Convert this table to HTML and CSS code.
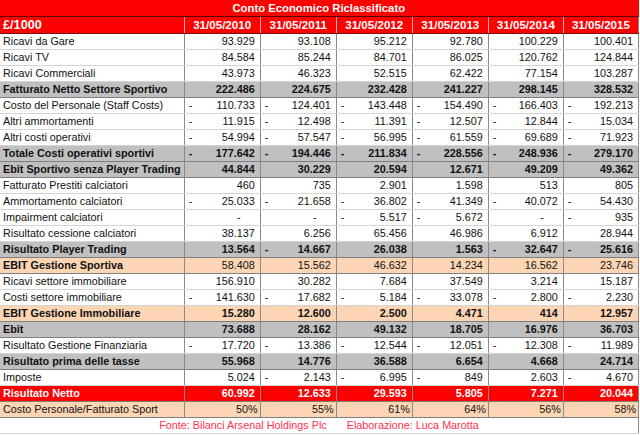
FILE: index.html
```html
<!DOCTYPE html>
<html lang="it">
<head>
<meta charset="utf-8">
<title>Conto Economico Riclassificato</title>
<link rel="stylesheet" href="styles.css">
</head>
<body>
<table class="ce">
<colgroup>
<col class="c-label"><col class="c-76"><col class="c-76"><col class="c-76"><col class="c-76"><col class="c-75"><col class="c-75">
</colgroup>
<thead>
<tr class="title"><th colspan="7">Conto Economico Riclassificato</th></tr>
<tr class="head"><th class="lbl">£/1000</th><th>31/05/2010</th><th>31/05/2011</th><th>31/05/2012</th><th>31/05/2013</th><th>31/05/2014</th><th>31/05/2015</th></tr>
</thead>
<tbody>
<tr><td class="lbl">Ricavi da Gare</td><td>93.929</td><td>93.108</td><td>95.212</td><td>92.780</td><td>100.229</td><td>100.401</td></tr>
<tr><td class="lbl">Ricavi TV</td><td>84.584</td><td>85.244</td><td>84.701</td><td>86.025</td><td>120.762</td><td>124.844</td></tr>
<tr><td class="lbl">Ricavi Commerciali</td><td>43.973</td><td>46.323</td><td>52.515</td><td>62.422</td><td>77.154</td><td>103.287</td></tr>
<tr class="grey bold"><td class="lbl">Fatturato Netto Settore Sportivo</td><td>222.486</td><td>224.675</td><td>232.428</td><td>241.227</td><td>298.145</td><td>328.532</td></tr>
<tr><td class="lbl">Costo del Personale (Staff Costs)</td><td><span class="m">-</span>110.733</td><td><span class="m">-</span>124.401</td><td><span class="m">-</span>143.448</td><td><span class="m">-</span>154.490</td><td><span class="m">-</span>166.403</td><td><span class="m">-</span>192.213</td></tr>
<tr><td class="lbl">Altri ammortamenti</td><td><span class="m">-</span>11.915</td><td><span class="m">-</span>12.498</td><td><span class="m">-</span>11.391</td><td><span class="m">-</span>12.507</td><td><span class="m">-</span>12.844</td><td><span class="m">-</span>15.034</td></tr>
<tr><td class="lbl">Altri costi operativi</td><td><span class="m">-</span>54.994</td><td><span class="m">-</span>57.547</td><td><span class="m">-</span>56.995</td><td><span class="m">-</span>61.559</td><td><span class="m">-</span>69.689</td><td><span class="m">-</span>71.923</td></tr>
<tr class="grey bold"><td class="lbl">Totale Costi operativi sportivi</td><td><span class="m">-</span>177.642</td><td><span class="m">-</span>194.446</td><td><span class="m">-</span>211.834</td><td><span class="m">-</span>228.556</td><td><span class="m">-</span>248.936</td><td><span class="m">-</span>279.170</td></tr>
<tr class="grey bold"><td class="lbl">Ebit Sportivo senza Player Trading</td><td>44.844</td><td>30.229</td><td>20.594</td><td>12.671</td><td>49.209</td><td>49.362</td></tr>
<tr><td class="lbl">Fatturato Prestiti calciatori</td><td>460</td><td>735</td><td>2.901</td><td>1.598</td><td>513</td><td>805</td></tr>
<tr><td class="lbl">Ammortamento calciatori</td><td><span class="m">-</span>25.033</td><td><span class="m">-</span>21.658</td><td><span class="m">-</span>36.802</td><td><span class="m">-</span>41.349</td><td><span class="m">-</span>40.072</td><td><span class="m">-</span>54.430</td></tr>
<tr><td class="lbl">Impairment calciatori</td><td class="z">-</td><td class="z">-</td><td><span class="m">-</span>5.517</td><td><span class="m">-</span>5.672</td><td class="z">-</td><td><span class="m">-</span>935</td></tr>
<tr><td class="lbl">Risultato cessione calciatori</td><td>38.137</td><td>6.256</td><td>65.456</td><td>46.986</td><td>6.912</td><td>28.944</td></tr>
<tr class="grey bold"><td class="lbl">Risultato Player Trading</td><td>13.564</td><td><span class="m">-</span>14.667</td><td>26.038</td><td>1.563</td><td><span class="m">-</span>32.647</td><td><span class="m">-</span>25.616</td></tr>
<tr class="orange"><td class="lbl strong">EBIT Gestione Sportiva</td><td>58.408</td><td>15.562</td><td>46.632</td><td>14.234</td><td>16.562</td><td>23.746</td></tr>
<tr><td class="lbl">Ricavi settore immobiliare</td><td>156.910</td><td>30.282</td><td>7.684</td><td>37.549</td><td>3.214</td><td>15.187</td></tr>
<tr><td class="lbl">Costi settore immobiliare</td><td><span class="m">-</span>141.630</td><td><span class="m">-</span>17.682</td><td><span class="m">-</span>5.184</td><td><span class="m">-</span>33.078</td><td><span class="m">-</span>2.800</td><td><span class="m">-</span>2.230</td></tr>
<tr class="orange bold"><td class="lbl">EBIT Gestione Immobiliare</td><td>15.280</td><td>12.600</td><td>2.500</td><td>4.471</td><td>414</td><td>12.957</td></tr>
<tr class="grey bold"><td class="lbl">Ebit</td><td>73.688</td><td>28.162</td><td>49.132</td><td>18.705</td><td>16.976</td><td>36.703</td></tr>
<tr><td class="lbl">Risultato Gestione Finanziaria</td><td><span class="m">-</span>17.720</td><td><span class="m">-</span>13.386</td><td><span class="m">-</span>12.544</td><td><span class="m">-</span>12.051</td><td><span class="m">-</span>12.308</td><td><span class="m">-</span>11.989</td></tr>
<tr class="grey bold"><td class="lbl">Risultato prima delle tasse</td><td>55.968</td><td>14.776</td><td>36.588</td><td>6.654</td><td>4.668</td><td>24.714</td></tr>
<tr><td class="lbl">Imposte</td><td>5.024</td><td><span class="m">-</span>2.143</td><td><span class="m">-</span>6.995</td><td><span class="m">-</span>849</td><td>2.603</td><td><span class="m">-</span>4.670</td></tr>
<tr class="red bold"><td class="lbl">Risultato Netto</td><td>60.992</td><td>12.633</td><td>29.593</td><td>5.805</td><td>7.271</td><td>20.044</td></tr>
<tr class="orange pct"><td class="lbl">Costo Personale/Fatturato Sport</td><td>50%</td><td>55%</td><td>61%</td><td>64%</td><td>56%</td><td>58%</td></tr>
<tr class="src"><td colspan="7"><div class="src-in"><span>Fonte: Bilanci Arsenal Holdings Plc</span><span>Elaborazione: Luca Marotta</span></div></td></tr>
</tbody>
</table>
</body>
</html>
```

FILE: styles.css
```css
html, body {
  margin: 0;
  padding: 0;
  background: #ffffff;
}

.ce {
  border-collapse: collapse;
  table-layout: fixed;
  width: 639px;
  font-family: "Liberation Sans", Arial, sans-serif;
  font-size: 10.8px;
  color: #111111;
}

.c-label { width: 184px; }
.c-76 { width: 76px; }
.c-75 { width: 75px; }

.ce td,
.ce th {
  padding: 0 5px 0 4px;
  height: 15px;
  line-height: 15px;
  white-space: nowrap;
  overflow: hidden;
  text-align: right;
  border-top: 1px solid #d4d4d4;
  border-bottom: 1px solid #d4d4d4;
  border-left: 1px solid #8a8a8a;
  border-right: 1px solid #8a8a8a;
}

.ce td.lbl,
.ce th.lbl {
  text-align: left;
  padding-left: 3px;
  border-left: none;
}

.m {
  float: left;
}

.ce td.z {
  padding-right: 19px;
}

/* title & header */
.title th {
  background: #ff0000;
  color: #ffffff;
  font-weight: bold;
  font-size: 11.3px;
  text-align: center;
  height: 16px;
  line-height: 16px;
  border: none;
  border-bottom: 1px solid #5a0000;
}

.head th {
  background: #ff0000;
  color: #ffffff;
  font-weight: bold;
  font-size: 11.6px;
  text-align: center;
  height: 16px;
  line-height: 16px;
  padding: 0;
  border-top: 1px solid #5a0000;
  border-bottom: 1px solid #7a1010;
  border-left: 1px solid #ffb3b3;
  border-right: 1px solid #ffb3b3;
}

.head th.lbl {
  font-size: 12.7px;
  padding-left: 3px;
  border-left: none;
}

.head th:last-child {
  border-right: 1px solid #8a8a8a;
}

/* row variants */
.bold td { font-weight: bold; }
.strong { font-weight: bold; }

.grey td {
  background: #c0c0c0;
  border-top: 1px solid #7f7f7f;
  border-bottom: 1px solid #7f7f7f;
}

.orange td {
  background: #fcd5b4;
  border-top: 1px solid #7f7f7f;
  border-bottom: 1px solid #7f7f7f;
}

.red td {
  background: #ff0000;
  color: #ffffff;
  border-top: 1px solid #7f7f7f;
  border-bottom: 1px solid #7f7f7f;
}

.pct td {
  padding-right: 2px;
}

.pct td.lbl {
  padding-right: 0;
}

/* source row */
.src td {
  text-align: center;
  color: #ff3050;
  padding: 0;
  border-left: none;
}

.src-in {
  display: flex;
  justify-content: center;
  gap: 20px;
}
```
